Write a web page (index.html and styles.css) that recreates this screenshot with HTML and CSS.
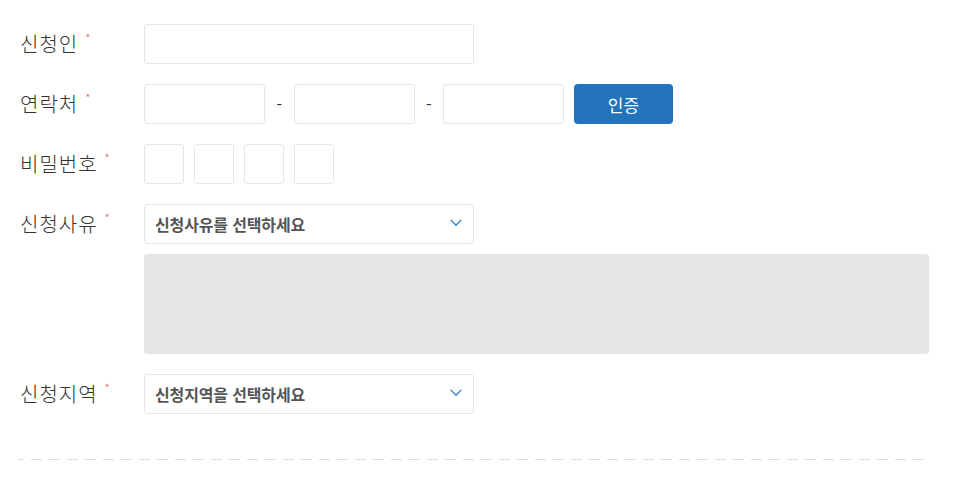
FILE: index.html
```html
<!DOCTYPE html>
<html lang="ko">
<head>
<meta charset="utf-8">
<link rel="stylesheet" href="styles.css">
</head>
<body>
<form class="form">
  <div class="row">
    <div class="label">신청인<span class="req">*</span></div>
    <div class="field"><input class="input wide" type="text"></div>
  </div>
  <div class="row">
    <div class="label">연락처<span class="req">*</span></div>
    <div class="field">
      <input class="input phone" type="text">
      <span class="sep">-</span>
      <input class="input phone" type="text">
      <span class="sep">-</span>
      <input class="input phone" type="text">
      <button class="btn" type="button">인증</button>
    </div>
  </div>
  <div class="row">
    <div class="label">비밀번호<span class="req">*</span></div>
    <div class="field pw">
      <input class="input digit" type="password">
      <input class="input digit" type="password">
      <input class="input digit" type="password">
      <input class="input digit" type="password">
    </div>
  </div>
  <div class="row">
    <div class="label">신청사유<span class="req">*</span></div>
    <div class="field col">
      <div class="select">
        <span>신청사유를 선택하세요</span>
        <svg class="chev" width="12" height="8" viewBox="0 0 12 8"><path d="M0.7 0.8 L6 6.2 L11.3 0.8" fill="none" stroke="#3b87cc" stroke-width="1.3"/></svg>
      </div>
      <div class="textarea"></div>
    </div>
  </div>
  <div class="row">
    <div class="label">신청지역<span class="req">*</span></div>
    <div class="field">
      <div class="select">
        <span>신청지역을 선택하세요</span>
        <svg class="chev" width="12" height="8" viewBox="0 0 12 8"><path d="M0.7 0.8 L6 6.2 L11.3 0.8" fill="none" stroke="#3b87cc" stroke-width="1.3"/></svg>
      </div>
    </div>
  </div>
  <div class="divider"></div>
</form>
</body>
</html>
```
FILE: styles.css
```css
* { box-sizing: border-box; }
html, body { margin: 0; padding: 0; background: #fff; }
body {
  font-family: "Noto Sans CJK KR", "Noto Sans", sans-serif;
  color: #333;
}
.form {
  padding: 24px 0 0 20px;
  width: 957px;
}
.row {
  display: flex;
  align-items: flex-start;
  margin-bottom: 20px;
}
.label {
  width: 124px;
  flex: none;
  height: 40px;
  line-height: 40px;
  font-size: 20px;
  font-weight: 300;
  letter-spacing: 1px;
  color: #333;
  white-space: nowrap;
}
.req {
  color: #e06666;
  font-size: 12px;
  letter-spacing: 0;
  vertical-align: top;
  line-height: 12px;
  position: relative;
  top: 8px;
  margin-left: 7px;
}
.field {
  display: flex;
  align-items: center;
}
.field.col {
  flex-direction: column;
  align-items: flex-start;
  gap: 10px;
}
.pw { gap: 10px; }
.input {
  height: 40px;
  border: 1px solid #e6e6e6;
  border-radius: 3px;
  background: #fff;
  margin: 0;
  padding: 0 10px;
  font: inherit;
  outline: none;
}
.wide { width: 330px; }
.phone { width: 121px; }
.digit { width: 40px; padding: 0; }
.sep {
  width: 28.5px;
  text-align: center;
  font-size: 16px;
  color: #333;
}
.btn {
  margin-left: 10px;
  width: 99px;
  height: 40px;
  border: 0;
  border-radius: 4px;
  background: #2273bc;
  color: #fff;
  font-family: "Noto Sans CJK KR", sans-serif;
  font-size: 17px;
  font-weight: 400;
  padding: 0;
}
.select {
  width: 330px;
  height: 40px;
  border: 1px solid #e6e6e6;
  border-radius: 3px;
  display: flex;
  align-items: center;
  justify-content: space-between;
  padding: 0 11px 0 10px;
  font-size: 16px;
  font-weight: 700;
  color: #555;
  letter-spacing: -0.15px;
}
.chev { display: block; margin-top: -2px; }
.textarea {
  width: 785px;
  height: 100px;
  background: #e6e6e6;
  border-radius: 3px;
}
.divider {
  margin: 45px 0 0 -2px;
  width: 907px;
  height: 1px;
  background: repeating-linear-gradient(to right, #dcdcdc 0 6px, transparent 6px 13px, #dcdcdc 13px 18px);
}
```
